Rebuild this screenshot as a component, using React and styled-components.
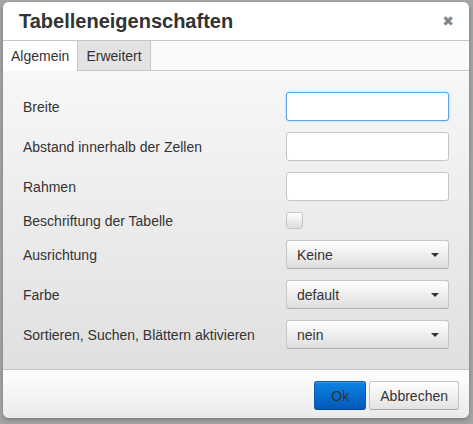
import React, { useState } from 'react';
import styled, { createGlobalStyle } from 'styled-components';

const GlobalStyle = createGlobalStyle`
  html, body {
    margin: 0;
    padding: 0;
    background: #a4a4a4;
    font-family: 'Liberation Sans', Arial, sans-serif;
  }
`;

const Page = styled.div`
  width: 473px;
  height: 424px;
  padding: 2px 0 0 3px;
  box-sizing: border-box;
`;

const Dialog = styled.div`
  width: 466px;
  height: 416px;
  background: linear-gradient(to bottom, #fdfdfd, #dcdcdc);
  border-radius: 6px;
  box-shadow: 0 2px 4px rgba(0, 0, 0, 0.25);
  overflow: hidden;
  display: flex;
  flex-direction: column;
  color: #333;
`;

const Header = styled.div`
  height: 38px;
  flex: none;
  background: #fff;
  border-bottom: 1px solid #c5c5c5;
  display: flex;
  align-items: center;
  justify-content: space-between;
  padding: 0 15px 0 16px;
`;

const Title = styled.h1`
  margin: 0;
  font-size: 20px;
  font-weight: bold;
  color: #333;
`;

const Close = styled.button`
  border: 0;
  background: none;
  padding: 0;
  font-family: 'DejaVu Sans', sans-serif;
  font-size: 14px;
  font-weight: bold;
  color: #858585;
  cursor: pointer;
`;

const TabBar = styled.div`
  height: 29px;
  flex: none;
  display: flex;
  background: #fafafa;
  border-bottom: 1px solid #c5c5c5;
`;

const Tab = styled.div`
  padding: 0 8px;
  display: flex;
  align-items: center;
  font-size: 14px;
  background: ${(p) => (p.$active ? '#fff' : '#e3e3e3')};
  border-right: 1px solid #c5c5c5;
  margin-bottom: ${(p) => (p.$active ? '-1px' : '0')};
  color: #333;
`;

const Body = styled.div`
  flex: 1;
  padding: 21px 20px 0 20px;
  display: grid;
  grid-template-columns: 1fr 163px;
  grid-auto-rows: min-content;
  row-gap: 11px;
  align-items: center;
  align-content: start;
`;

const Label = styled.label`
  font-size: 14px;
  color: #333;
`;

const TextInput = styled.input`
  box-sizing: border-box;
  width: 163px;
  height: 29px;
  border: 1px solid ${(p) => (p.$focused ? '#59a5e5' : '#c5c5c5')};
  border-radius: 3px;
  background: #fff;
  box-shadow: ${(p) => (p.$focused ? '0 0 2px rgba(89,165,229,0.6)' : 'none')};
  outline: none;
  padding: 0 8px;
  font-size: 14px;
  font-family: inherit;
`;

const Checkbox = styled.div`
  box-sizing: border-box;
  width: 17px;
  height: 17px;
  border: 1px solid #c5c5c5;
  border-radius: 3px;
  background: linear-gradient(to bottom, #fff, #dcdcdc);
`;

const Select = styled.div`
  box-sizing: border-box;
  width: 163px;
  height: 29px;
  border: 1px solid #c5c5c5;
  border-bottom-color: #aeaeae;
  border-radius: 3px;
  background: linear-gradient(to bottom, #fff, #dedede);
  display: flex;
  align-items: center;
  justify-content: space-between;
  padding: 0 9px 0 10px;
  font-size: 14px;
  color: #333;
`;

const Caret = styled.span`
  width: 0;
  height: 0;
  border-left: 4px solid transparent;
  border-right: 4px solid transparent;
  border-top: 4px solid #333;
`;

const Footer = styled.div`
  height: 49px;
  flex: none;
  background: linear-gradient(to bottom, #fff, #eaeaea);
  border-top: 1px solid #c5c5c5;
  display: flex;
  justify-content: flex-end;
  align-items: flex-start;
  gap: 3px;
  padding: 11px 10px 0 0;
  box-sizing: border-box;
`;

const Button = styled.button`
  height: 29px;
  min-width: ${(p) => (p.$primary ? '52px' : '89px')};
  padding: 0 10px;
  border-radius: 3px;
  font-size: 14px;
  font-family: inherit;
  color: #333;
  border: 1px solid ${(p) => (p.$primary ? '#0a5aa9' : '#c5c5c5')};
  border-bottom-color: ${(p) => (p.$primary ? '#05468c' : '#a8a8a8')};
  background: ${(p) =>
    p.$primary
      ? 'linear-gradient(to bottom, #0c84e4, #0259b8)'
      : 'linear-gradient(to bottom, #fff, #e2e2e2)'};
  box-shadow: inset 0 1px 0 rgba(255, 255, 255, 0.2);
  cursor: pointer;
`;

const rows = [
  { label: 'Breite', type: 'input', focused: true },
  { label: 'Abstand innerhalb der Zellen', type: 'input' },
  { label: 'Rahmen', type: 'input' },
  { label: 'Beschriftung der Tabelle', type: 'check' },
  { label: 'Ausrichtung', type: 'select', value: 'Keine' },
  { label: 'Farbe', type: 'select', value: 'default' },
  { label: 'Sortieren, Suchen, Blättern aktivieren', type: 'select', value: 'nein' },
];

function App() {
  const [tab, setTab] = useState(0);

  return (
    <Page>
      <GlobalStyle />
      <Dialog>
        <Header>
          <Title>Tabelleneigenschaften</Title>
          <Close>✖</Close>
        </Header>
        <TabBar>
          <Tab $active={tab === 0} onClick={() => setTab(0)}>Algemein</Tab>
          <Tab $active={tab === 1} onClick={() => setTab(1)}>Erweitert</Tab>
        </TabBar>
        <Body>
          {rows.map((r) => (
            <React.Fragment key={r.label}>
              <Label>{r.label}</Label>
              {r.type === 'input' && <TextInput $focused={r.focused} />}
              {r.type === 'check' && <Checkbox />}
              {r.type === 'select' && (
                <Select>
                  {r.value}
                  <Caret />
                </Select>
              )}
            </React.Fragment>
          ))}
        </Body>
        <Footer>
          <Button $primary>Ok</Button>
          <Button>Abbrechen</Button>
        </Footer>
      </Dialog>
    </Page>
  );
}

export default App;
